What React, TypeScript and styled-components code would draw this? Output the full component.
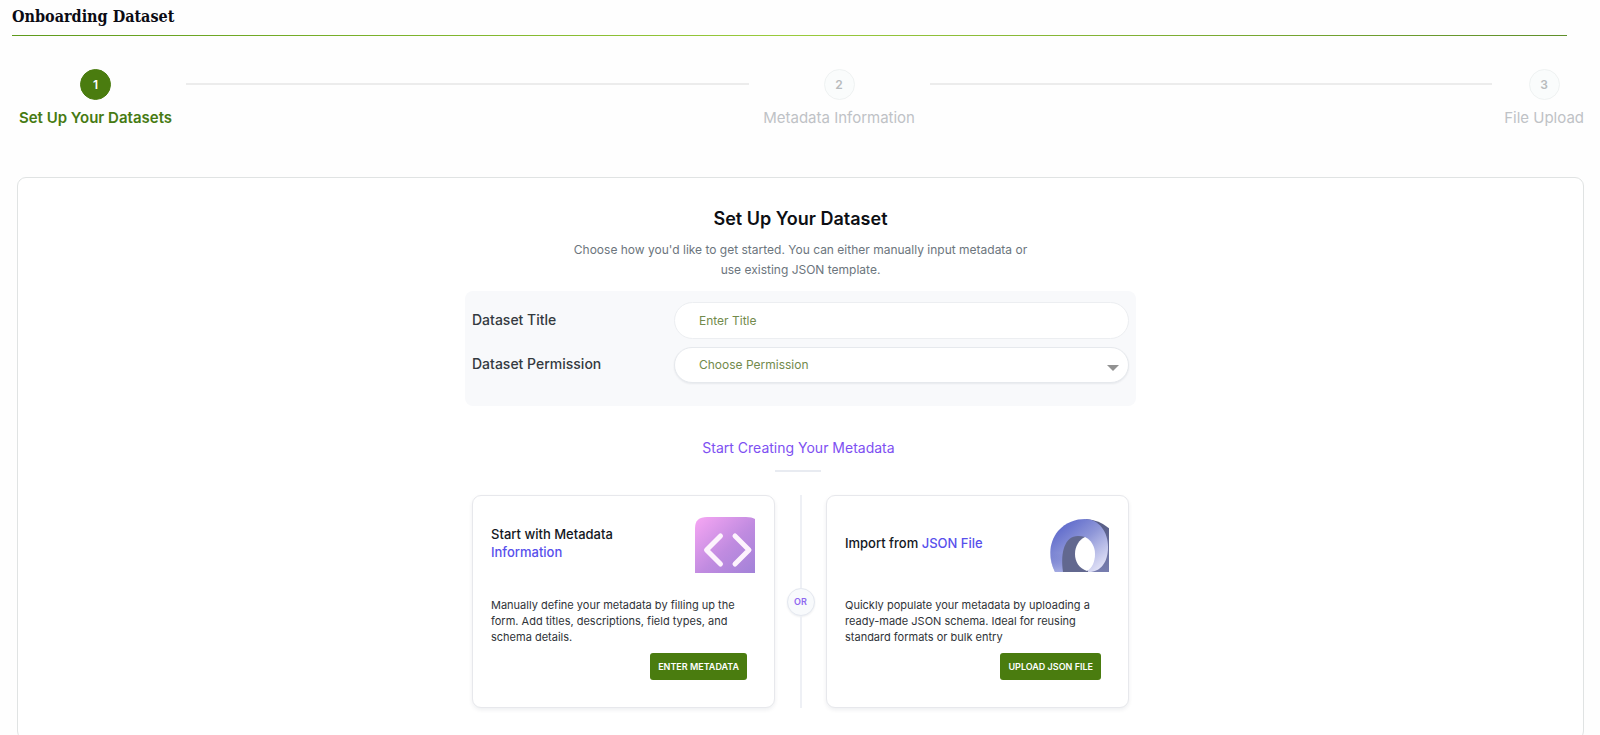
import React from "react";
import styled, { createGlobalStyle } from "styled-components";

const GlobalStyle = createGlobalStyle`
  *, *::before, *::after { box-sizing: border-box; }
  body {
    margin: 0;
    background: #fefefe;
    color: #101828;
    font-family: Inter, "Open Sans", sans-serif;
  }
  h1, h2, h3, p, ol { margin: 0; padding: 0; }
`;

const Page = styled.div`
  height: 100vh;
  overflow: hidden;
`;

const PageHeader = styled.header`
  margin: 0 33px 0 12px;
  padding: 5px 0 6px;
  border-bottom: 1px solid;
  border-image: linear-gradient(90deg, #5e9a1c, #9acb3c 50%, #5f8f2a) 1;
`;

const PageTitle = styled.h1`
  font: 700 16px/24px "DejaVu Serif Condensed", "DejaVu Serif", serif;
  color: #0b0b14;
`;

const Stepper = styled.ol`
  display: flex;
  align-items: flex-start;
  gap: 12px;
  margin: 33px 16px 0 17px;
  list-style: none;
`;

const Step = styled.li<{ $active?: boolean }>`
  display: flex;
  flex-direction: column;
  align-items: center;
  gap: 8px;
  min-width: 157px;
  color: ${(p) => (p.$active ? "#467a12" : "#bfc2c6")};
  font-size: 15px;
  font-weight: ${(p) => (p.$active ? 600 : 400)};
  line-height: 20px;

  &:last-child {
    min-width: 0;
  }
`;

const StepDot = styled.span<{ $active?: boolean }>`
  display: grid;
  place-items: center;
  width: 31px;
  height: 31px;
  border: 1px solid ${(p) => (p.$active ? "#4a7c0f" : "#eff2f2")};
  border-radius: 50%;
  background: ${(p) => (p.$active ? "#4a7c0f" : "#fafcfc")};
  color: ${(p) => (p.$active ? "#ffffff" : "#b8bbbd")};
  font-size: 12px;
  font-weight: 600;
`;

const StepLine = styled.li`
  flex: 1;
  height: 2px;
  margin-top: 14px;
  background: #ececec;
`;

const Panel = styled.main`
  display: flex;
  flex-direction: column;
  align-items: center;
  margin: 49px 16px 0 17px;
  padding: 29px 16px 31px;
  border: 1px solid #e0e3e3;
  border-radius: 9px;
  background: #ffffff;
`;

const PanelTitle = styled.h2`
  font-size: 18px;
  font-weight: 600;
  line-height: 24px;
  color: #0d0f14;
`;

const PanelText = styled.p`
  max-width: 480px;
  margin-top: 9px;
  color: #6c757d;
  font-size: 12px;
  line-height: 20px;
  text-align: center;
`;

const Form = styled.form`
  display: grid;
  gap: 8px;
  width: 100%;
  max-width: 671px;
  margin-top: 11px;
  padding: 11px 7px 23px;
  border-radius: 8px;
  background: #f8f9fb;
`;

const Field = styled.div`
  display: grid;
  grid-template-columns: 202px 1fr;
  align-items: center;
`;

const FieldLabel = styled.label`
  padding-bottom: 2px;
  color: #343a40;
  font-size: 14px;
  font-weight: 500;
  line-height: 20px;
`;

const TextInput = styled.input`
  width: 100%;
  height: 37px;
  padding: 0 24px;
  border: 1px solid #eceef1;
  border-radius: 19px;
  background: #ffffff;
  color: #728a4c;
  font: 400 12px/20px Inter, sans-serif;
  outline: none;
  &::placeholder { color: #728a4c; opacity: 1; }
`;

const SelectWrap = styled.div`
  position: relative;
`;

const Select = styled.select`
  display: block;
  width: 100%;
  height: 36px;
  padding: 0 24px;
  border: 1px solid #e6e9ed;
  border-radius: 19px;
  background: #ffffff;
  box-shadow: 0 1px 2px rgba(20, 30, 50, 0.07);
  color: #728a4c;
  font: 400 12px/20px Inter, sans-serif;
  appearance: none;
`;

const Caret = styled.span`
  position: absolute;
  top: 18px;
  right: 10px;
  border: solid transparent;
  border-width: 6px 6px 0;
  border-top-color: #929292;
  pointer-events: none;
`;

const SectionTitle = styled.h2`
  margin-top: 31px;
  color: #7e50f2;
  font-size: 14px;
  font-weight: 400;
  line-height: 22px;
`;

const Rule = styled.span`
  width: 46px;
  height: 2px;
  margin-top: 11px;
  background: #e8ebf1;
`;

const SectionHeading = styled.div`
  display: flex;
  flex-direction: column;
  align-items: center;
  padding-right: 4px;
`;

const Options = styled.div`
  display: grid;
  grid-template-columns: 1fr 51px 1fr;
  width: 100%;
  max-width: 657px;
  margin-top: 23px;
`;

const Card = styled.section`
  display: flex;
  flex-direction: column;
  min-height: 212px;
  padding: 21px 19px 27px 18px;
  border: 1px solid #e7e8ec;
  border-radius: 9px;
  background: #ffffff;
  box-shadow: 0 2px 4px rgba(20, 30, 50, 0.07);
`;

const CardTop = styled.div`
  display: flex;
  align-items: center;
  justify-content: space-between;
  height: 56px;
`;

const CardTitle = styled.h3`
  padding-bottom: 4px;
  color: #131722;
  font-size: 13px;
  font-weight: 500;
  line-height: 18px;
`;

const Accent = styled.span`
  color: #5850ec;
`;

const CardText = styled.p`
  margin-top: 24px;
  color: #2f3338;
  font-size: 11px;
  line-height: 16px;
`;

const CardButton = styled.button`
  align-self: flex-end;
  height: 27px;
  margin: 8px 8px 0 0;
  padding: 0 8px;
  border: 0;
  border-radius: 3px;
  background: #4a7c0f;
  color: #ffffff;
  font: 600 9px/12px Inter, sans-serif;
  text-transform: uppercase;
`;

const Divider = styled.div`
  display: flex;
  flex-direction: column;
  align-items: center;
  &::before, &::after {
    content: "";
    flex: 1;
    width: 2px;
    background: #eef0f5;
  }
`;

const OrBadge = styled.span`
  display: grid;
  place-items: center;
  width: 28px;
  height: 28px;
  border: 1px solid #e4e8f0;
  border-radius: 50%;
  background: #f8fafc;
  box-shadow: 0 1px 2px rgba(20, 30, 50, 0.07);
  color: #8f68f0;
  font-size: 9px;
  font-weight: 600;
`;

const CodeIcon = () => (
  <svg width="60" height="56" viewBox="0 0 60 56" aria-hidden="true">
    <defs>
      <linearGradient id="code-fill" x1="0" y1="0" x2="1" y2="1">
        <stop offset="0.05" stopColor="#f2a4f2" />
        <stop offset="0.55" stopColor="#c08be0" />
        <stop offset="1" stopColor="#a282d8" />
      </linearGradient>
    </defs>
    <path d="M0 56V11Q0 0 12 0H51Q57 0 60 2V56Z" fill="url(#code-fill)" />
    <path
      d="M25.500 19L11.500 33L25.500 47M40 19L54 33L40 47"
      fill="none"
      stroke="#fdf3fd"
      strokeWidth="5"
      strokeLinecap="round"
      strokeLinejoin="round"
    />
  </svg>
);

const JsonIcon = () => (
  <svg width="60" height="56" viewBox="-1 0 60 56" aria-hidden="true">
    <defs>
      <linearGradient id="json-ring" x1="0.15" y1="0.1" x2="0.9" y2="0.95">
        <stop offset="0" stopColor="#5c68cb" />
        <stop offset="0.45" stopColor="#8f97d8" />
        <stop offset="1" stopColor="#e6e6f8" />
      </linearGradient>
      <linearGradient id="json-left" x1="0" y1="0" x2="0" y2="1">
        <stop offset="0" stopColor="#5a66c8" stopOpacity="0" />
        <stop offset="1" stopColor="#a4abe2" />
      </linearGradient>
      <linearGradient id="json-back" x1="0" y1="0" x2="0" y2="1">
        <stop offset="0" stopColor="#555b83" />
        <stop offset="1" stopColor="#777daf" />
      </linearGradient>
    </defs>
    <path d="M36 2Q50 3 60 12V55H36Z" fill="url(#json-back)" />
    <path
      d="M5 55C-3 38 0 24 8 14C16 5 26 2 35 2C49 2 58 15 58 30C58 46 50 55 39 55Z"
      fill="url(#json-ring)"
    />
    <path d="M5 55C2 49 0 43 0 36H13V55Z" fill="url(#json-left)" />
    <path d="M13 55C10 35 15 19 28 19Q32 19 35 20L38 55Z" fill="#62688f" />
    <path
      d="M35 20C41 23 45 29 45 37C45 45 42 51 37 54C29 51 25 45 25 37C25 29 29 23 35 20Z"
      fill="#ffffff"
    />
  </svg>
);

export default function App() {
  return (
    <Page>
      <GlobalStyle />
      <PageHeader>
        <PageTitle>Onboarding Dataset</PageTitle>
      </PageHeader>

      <Stepper>
        <Step $active aria-current="step">
          <StepDot $active>1</StepDot>
          Set Up Your Datasets
        </Step>
        <StepLine aria-hidden="true" />
        <Step>
          <StepDot>2</StepDot>
          Metadata Information
        </Step>
        <StepLine aria-hidden="true" />
        <Step>
          <StepDot>3</StepDot>
          File Upload
        </Step>
      </Stepper>

      <Panel>
        <PanelTitle>Set Up Your Dataset</PanelTitle>
        <PanelText>
          Choose how you'd like to get started. You can either manually input metadata or
          <br />
          use existing JSON template.
        </PanelText>

        <Form>
          <Field>
            <FieldLabel htmlFor="title">Dataset Title</FieldLabel>
            <TextInput id="title" type="text" placeholder="Enter Title" />
          </Field>
          <Field>
            <FieldLabel htmlFor="permission">Dataset Permission</FieldLabel>
            <SelectWrap>
              <Select id="permission" defaultValue="">
                <option value="">Choose Permission</option>
                <option value="public">Public</option>
                <option value="private">Private</option>
              </Select>
              <Caret />
            </SelectWrap>
          </Field>
        </Form>

        <SectionHeading>
          <SectionTitle>Start Creating Your Metadata</SectionTitle>
          <Rule />
        </SectionHeading>

        <Options>
          <Card>
            <CardTop>
              <CardTitle>
                Start with Metadata
                <br />
                <Accent>Information</Accent>
              </CardTitle>
              <CodeIcon />
            </CardTop>
            <CardText>
              Manually define your metadata by filling up the
              <br />
              form. Add titles, descriptions, field types, and
              <br />
              schema details.
            </CardText>
            <CardButton type="button">Enter Metadata</CardButton>
          </Card>
          <Divider>
            <OrBadge>OR</OrBadge>
          </Divider>
          <Card>
            <CardTop>
              <CardTitle>
                Import from <Accent>JSON File</Accent>
              </CardTitle>
              <JsonIcon />
            </CardTop>
            <CardText>
              Quickly populate your metadata by uploading a
              <br />
              ready-made JSON schema. Ideal for reusing
              <br />
              standard formats or bulk entry
            </CardText>
            <CardButton type="button">Upload JSON File</CardButton>
          </Card>
        </Options>
      </Panel>
    </Page>
  );
}
